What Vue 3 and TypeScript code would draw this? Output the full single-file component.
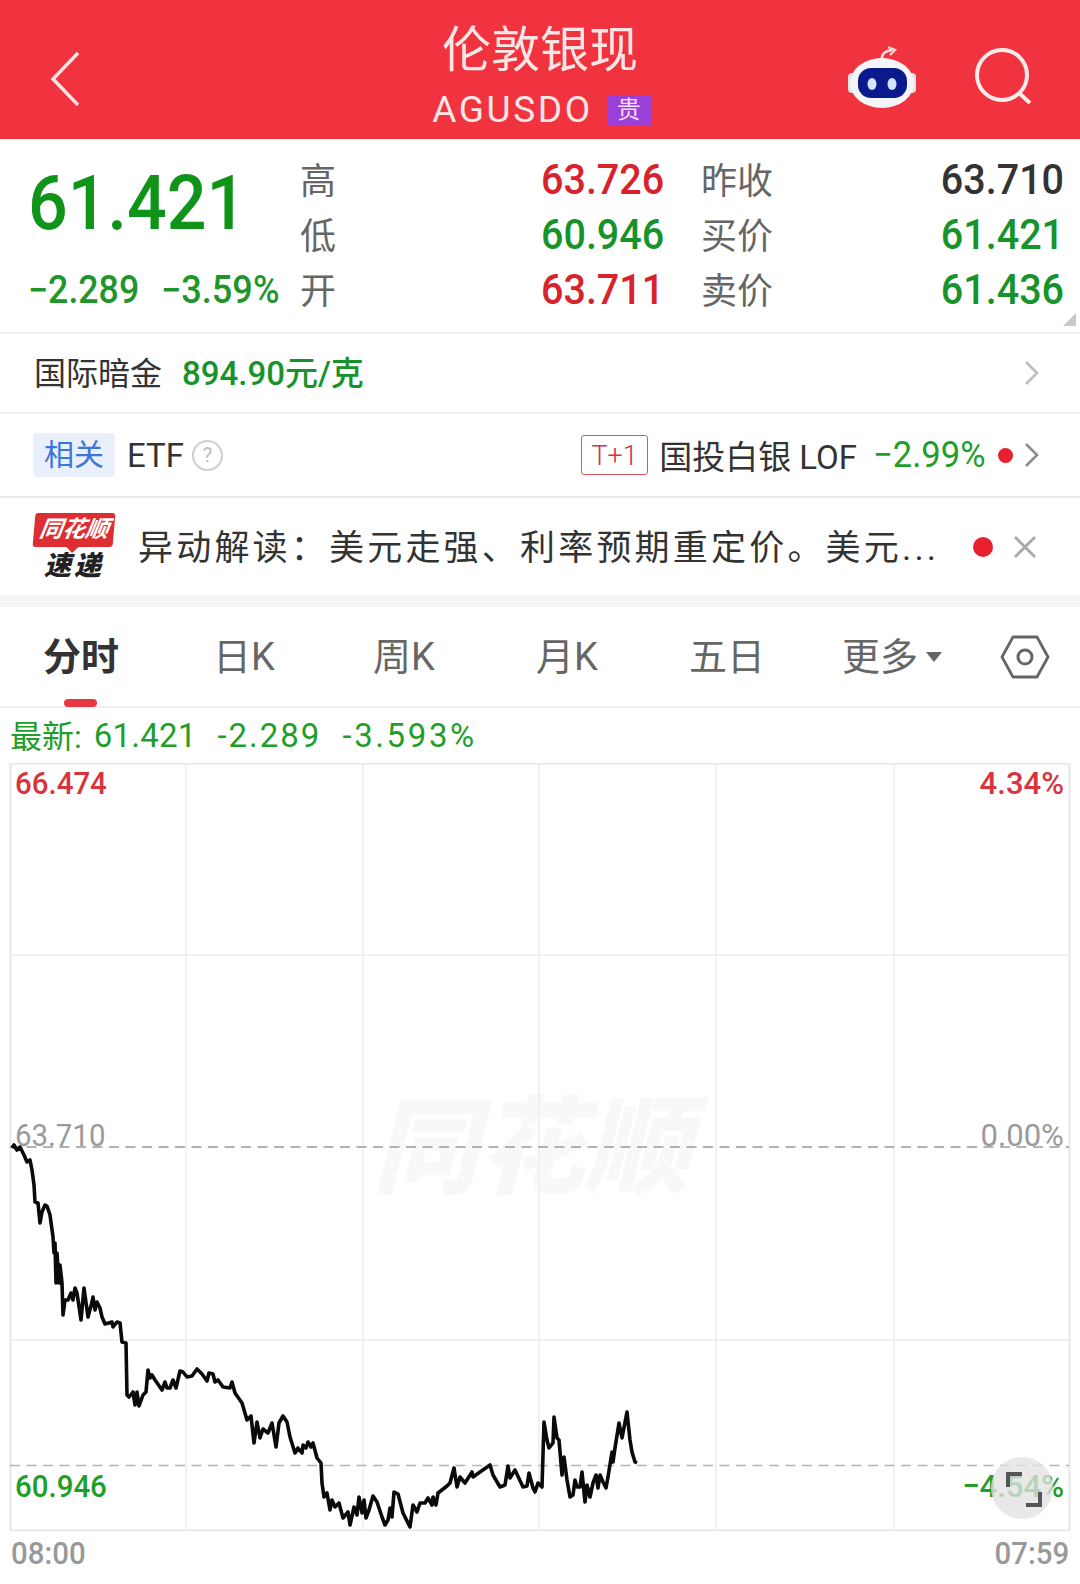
<template>
  <div class="page">
    <header class="topbar">
      <svg class="back" width="30" height="56" viewBox="0 0 30 56">
        <path d="M28 2 L3 28 L28 54" fill="none" stroke="#fbe3e3" stroke-width="3.5" />
      </svg>
      <div class="title-box">
        <div class="title">伦敦银现</div>
        <div class="subtitle">
          <span class="code">AGUSDO</span>
          <span class="metal-tag">贵</span>
        </div>
      </div>
      <div class="top-actions">
        <svg width="72" height="64" viewBox="846 45 72 64">
          <path d="M882 60 C881 54 885 51 892 50" fill="none" stroke="#f6dcdc" stroke-width="2.6" />
          <path d="M888 47 L895 50 L890 55" fill="none" stroke="#f6dcdc" stroke-width="2.4" />
          <rect x="848" y="73" width="8" height="20" rx="4" fill="#dfe3ea" />
          <rect x="908" y="73" width="8" height="20" rx="4" fill="#dfe3ea" />
          <ellipse cx="882" cy="83" rx="32" ry="25" fill="#f3f5f9" />
          <rect x="858" y="68" width="49" height="30" rx="13" fill="#0a1a8c" />
          <ellipse cx="872" cy="84" rx="4.5" ry="6" fill="#d6e4ff" />
          <ellipse cx="892" cy="84" rx="4.5" ry="6" fill="#d6e4ff" />
        </svg>
        <svg class="search" width="58" height="58" viewBox="974 49 58 58">
          <circle cx="1001" cy="76" r="25" fill="none" stroke="#fdeaea" stroke-width="4" />
          <path d="M1018 94 L1029 104" fill="none" stroke="#fdeaea" stroke-width="4" />
        </svg>
      </div>
    </header>

    <section class="quote">
      <div class="quote-main">
        <div class="big-price"><span class="squeeze">61.421</span></div>
        <div class="changes">
          <span class="squeeze">−2.289</span>
          <span class="squeeze pct">−3.59%</span>
        </div>
      </div>
      <div class="quote-grid">
        <template v-for="row in quoteRows" :key="row.a">
          <span class="q-label">{{ row.a }}</span>
          <span class="q-value squeeze" :class="row.aColor">{{ row.aValue }}</span>
          <span class="q-label">{{ row.b }}</span>
          <span class="q-value q-right" :class="row.bColor"><span class="squeeze-r">{{ row.bValue }}</span></span>
        </template>
      </div>
      <span class="corner"></span>
    </section>

    <div class="row gold-row">
      <span class="row-name">国际暗金</span>
      <span class="gold-price">894.90元/克</span>
      <svg class="chev" width="16" height="26" viewBox="0 0 16 26">
        <path d="M2 2 L13 13 L2 24" fill="none" stroke="#bdbdbd" stroke-width="2.6" />
      </svg>
    </div>

    <div class="row etf-row">
      <span class="related">相关</span>
      <span class="etf">ETF</span>
      <span class="help">?</span>
      <span class="spacer"></span>
      <span class="t1">T+1</span>
      <span class="fund">国投白银 LOF</span>
      <span class="fund-pct"><span class="squeeze">−2.99%</span></span>
      <span class="dot small"></span>
      <svg class="chev near" width="16" height="26" viewBox="0 0 16 26">
        <path d="M2 2 L13 13 L2 24" fill="none" stroke="#8c8c8c" stroke-width="2.6" />
      </svg>
    </div>

    <div class="row news-row">
      <div class="logo">
        <div class="logo-tag"><span>同花顺</span></div>
        <div class="logo-sub">速递</div>
      </div>
      <span class="news-text">异动解读：美元走强、利率预期重定价。美元...</span>
      <span class="dot"></span>
      <svg class="close" width="22" height="22" viewBox="0 0 22 22">
        <path d="M1 1 L21 21 M21 1 L1 21" fill="none" stroke="#a8a8a8" stroke-width="2.8" />
      </svg>
    </div>

    <nav class="tabs">
      <div v-for="tab in tabs" :key="tab" class="tab" :class="{ active: tab === '分时' }">{{ tab }}</div>
      <div class="tab more">更多<i class="caret"></i></div>
      <div class="tab-setting">
        <svg width="50" height="44" viewBox="0 0 50 44">
          <path d="M13 2 L37 2 L48 22 L37 42 L13 42 L2 22 Z" fill="none" stroke="#666" stroke-width="2.8" stroke-linejoin="round" />
          <circle cx="25" cy="22" r="7" fill="none" stroke="#666" stroke-width="3" />
        </svg>
      </div>
    </nav>

    <div class="latest">
      <span class="latest-cn">最新:</span>
      <span class="l-price">61.421</span>
      <span class="l-change">-2.289</span>
      <span class="l-pct">-3.593%</span>
    </div>

    <div class="chart">
      <div class="watermark">同花顺</div>

      <svg class="plot" width="1080" height="768" viewBox="0 763 1080 768">
        <rect x="10.5" y="763.5" width="1059" height="767" fill="none" stroke="#e6e6e6" stroke-width="2" />
        <path v-for="x in gridX" :key="x" :d="`M${x} 763 V1530`" stroke="#ececec" stroke-width="1.5" />
        <path d="M10 955 H1069 M10 1340 H1069" stroke="#ececec" stroke-width="1.5" />
        <path d="M10 1147 H1069" stroke="#999" stroke-width="1.6" stroke-dasharray="10 6.5" />
        <path d="M10 1465.5 H1069" stroke="#b5b5ae" stroke-width="1.4" stroke-dasharray="10 6.5" />
        <polyline :points="linePoints" fill="none" stroke="#0a0a0a" stroke-width="3.6" stroke-linejoin="round" />
      </svg>

      <span class="axis left top-row red">66.474</span>
      <span class="axis right top-row red">4.34%</span>
      <span class="axis left mid-row grey">63.710</span>
      <span class="axis right mid-row grey">0.00%</span>
      <span class="axis left low-row green">60.946</span>
      <span class="axis right low-row green">−4.54%</span>

      <div class="expand">
        <svg width="62" height="62" viewBox="0 0 62 62">
          <path d="M17 30 V17 H31 M35 48 H49 V35" fill="none" stroke="#555" stroke-width="4" />
        </svg>
      </div>
    </div>

    <div class="times">
      <span class="time-l">08:00</span>
      <span class="time-r">07:59</span>
    </div>
  </div>
</template>

<script setup lang="ts">
import { computed } from "vue";

type QuoteRow = {
  a: string;
  aValue: string;
  aColor: string;
  b: string;
  bValue: string;
  bColor: string;
};

const quoteRows: QuoteRow[] = [
  { a: "高", aValue: "63.726", aColor: "red", b: "昨收", bValue: "63.710", bColor: "dark" },
  { a: "低", aValue: "60.946", aColor: "green", b: "买价", bValue: "61.421", bColor: "green" },
  { a: "开", aValue: "63.711", aColor: "red", b: "卖价", bValue: "61.436", bColor: "green" },
];

const tabs = ["分时", "日K", "周K", "月K", "五日"];
const gridX = [186, 363, 539, 716, 894];

// 分时线，座標直接從截圖量的
const line: [number, number][] = [
  [12, 1148], [14, 1145], [17, 1150], [20, 1147], [24, 1155], [27, 1162], [30, 1160], [32, 1170],
  [34, 1185], [35, 1202], [38, 1203], [40, 1223], [42, 1212], [45, 1205], [47, 1206], [50, 1215],
  [53, 1237], [54, 1253], [55, 1243], [56, 1283], [57, 1253], [59, 1283], [60, 1265], [62, 1283],
  [63, 1315], [65, 1300], [68, 1300], [71, 1293], [73, 1300], [75, 1288], [77, 1293], [81, 1320],
  [84, 1288], [88, 1317], [92, 1302], [93, 1297], [95, 1310], [97, 1302], [100, 1308], [102, 1317],
  [105, 1324], [112, 1322], [113, 1327], [117, 1322], [120, 1323], [122, 1342], [126, 1343], [127, 1395],
  [129, 1397], [133, 1392], [135, 1405], [137, 1392], [139, 1406], [143, 1395], [146, 1392], [148, 1370],
  [150, 1378], [152, 1375], [155, 1380], [162, 1390], [165, 1382], [167, 1388], [170, 1388], [173, 1380],
  [176, 1388], [180, 1371], [183, 1372], [187, 1377], [192, 1376], [197, 1369], [202, 1374], [207, 1381],
  [209, 1373], [213, 1374], [215, 1382], [218, 1380], [223, 1387], [230, 1388], [232, 1382], [235, 1393],
  [242, 1403], [247, 1420], [251, 1416], [254, 1443], [257, 1422], [260, 1438], [263, 1429], [268, 1433],
  [272, 1423], [276, 1447], [279, 1423], [283, 1416], [287, 1422], [290, 1437], [295, 1453], [298, 1448],
  [302, 1453], [303, 1445], [306, 1448], [308, 1442], [311, 1447], [313, 1443], [317, 1458], [321, 1463],
  [322, 1483], [324, 1497], [327, 1493], [330, 1510], [332, 1500], [335, 1507], [339, 1503], [343, 1518],
  [348, 1512], [350, 1525], [354, 1507], [357, 1515], [359, 1497], [362, 1513], [364, 1500], [366, 1518],
  [369, 1510], [373, 1496], [377, 1502], [382, 1517], [385, 1525], [388, 1520], [390, 1508], [392, 1517],
  [394, 1492], [398, 1494], [403, 1513], [410, 1527], [413, 1505], [417, 1512], [420, 1503], [425, 1503],
  [428, 1498], [432, 1505], [433, 1497], [436, 1505], [438, 1493], [447, 1486], [450, 1483], [454, 1468],
  [457, 1487], [460, 1477], [465, 1483], [472, 1472], [473, 1477], [480, 1472], [490, 1465], [493, 1475],
  [500, 1487], [505, 1485], [508, 1466], [510, 1478], [515, 1470], [523, 1487], [527, 1486], [529, 1473],
  [533, 1488], [535, 1492], [538, 1483], [542, 1487], [544, 1422], [547, 1440], [549, 1448], [553, 1443],
  [554, 1417], [557, 1438], [559, 1440], [562, 1475], [564, 1457], [567, 1480], [570, 1497], [573, 1495],
  [575, 1480], [577, 1487], [580, 1487], [582, 1472], [585, 1502], [587, 1485], [590, 1497], [593, 1483],
  [596, 1475], [598, 1488], [600, 1475], [603, 1482], [606, 1488], [608, 1477], [612, 1452], [613, 1462],
  [615, 1448], [619, 1423], [622, 1438], [627, 1412], [630, 1440], [632, 1452], [635, 1462], [637, 1463],
];

const linePoints = computed(() => line.map(([x, y]) => `${x},${y}`).join(" "));
</script>

<style>
html,
body {
  margin: 0;
  background: #fff;
}
</style>

<style scoped>
.page {
  width: 1080px;
  height: 1584px;
  overflow: hidden;
  background: #fff;
  font-family: Roboto, "Noto Sans CJK SC", sans-serif;
  color: #333;
}
.topbar {
  height: 139px;
  background: #f1323f;
  display: grid;
  grid-template-columns: 1fr auto 1fr;
  align-items: center;
}
.back {
  margin-left: 50px;
  margin-top: 18px;
}
.title-box {
  text-align: center;
  color: #fbe6e6;
}
.title {
  font-size: 49px;
  line-height: 56px;
  margin-top: 14px;
}
.subtitle {
  display: flex;
  align-items: center;
  justify-content: center;
  gap: 14px;
  margin-top: 10px;
  margin-left: 3px;
}
.code {
  font-size: 37px;
  line-height: 42px;
  letter-spacing: 2.6px;
}
.metal-tag {
  width: 44px;
  height: 30px;
  background: #9a3fd8;
  color: #f4dcff;
  font-size: 24px;
  line-height: 30px;
  text-align: center;
}
.top-actions {
  display: flex;
  justify-content: flex-end;
  align-items: center;
  padding-right: 47px;
  padding-top: 14px;
  gap: 57px;
}
.quote {
  position: relative;
  height: 195px;
  display: flex;
  border-bottom: 2px solid #f0f0f0;
  box-sizing: border-box;
}
.quote-main {
  width: 300px;
  padding-left: 28px;
  box-sizing: border-box;
}
.big-price {
  font-size: 76px;
  line-height: 76px;
  font-weight: 500;
  color: #0f9419;
  margin-top: 26px;
}
.squeeze,
.squeeze-r {
  display: inline-block;
  transform-origin: left center;
  transform: scaleX(0.94);
}
.squeeze-r {
  transform-origin: right center;
}
.big-price .squeeze {
  transform: scaleX(0.92);
}
.changes {
  display: flex;
  font-size: 38px;
  line-height: 44px;
  font-weight: 500;
  color: #1f952a;
  margin-top: 27px;
  white-space: nowrap;
}
.changes .squeeze {
  width: 133px;
}
.changes .pct {
  transform: scaleX(0.95);
}
.quote-grid {
  flex: 1;
  display: grid;
  grid-template-columns: 241px 160px 1fr auto;
  grid-auto-rows: 55px;
  align-items: center;
  padding-top: 13px;
  padding-right: 16px;
}
.q-label {
  font-size: 36px;
  color: #666;
  line-height: 55px;
  margin-top: 6px;
}
.q-value {
  font-size: 42px;
  line-height: 55px;
  font-weight: 500;
}
.q-right {
  text-align: right;
}
.red {
  color: #d8222c;
}
.green {
  color: #16932a;
}
.dark {
  color: #333;
}
.corner {
  position: absolute;
  right: 4px;
  bottom: 6px;
  width: 0;
  height: 0;
  border-left: 13px solid transparent;
  border-bottom: 13px solid #c9c9c9;
}
.row {
  display: flex;
  align-items: center;
  box-sizing: border-box;
}
.gold-row {
  height: 80px;
  padding-left: 34px;
  border-bottom: 2px solid #f0f0f0;
}
.row-name {
  font-size: 32px;
  color: #333;
  margin-top: -4px;
}
.gold-price {
  font-size: 33px;
  font-weight: 500;
  color: #16932a;
  margin-left: 20px;
  margin-top: -4px;
  flex: 1;
}
.chev {
  margin-right: 40px;
}
.etf-row {
  height: 84px;
  padding-left: 33px;
  border-bottom: 2px solid #e8e8e8;
}
.related {
  width: 82px;
  height: 44px;
  background: #e9f0fc;
  border-radius: 4px;
  color: #3c76d8;
  font-size: 30px;
  line-height: 44px;
  text-align: center;
}
.etf {
  font-size: 33px;
  margin-left: 12px;
}
.help {
  width: 27px;
  height: 27px;
  margin-left: 8px;
  border: 2px solid #cfcfcf;
  border-radius: 50%;
  color: #bdbdbd;
  font-size: 20px;
  line-height: 27px;
  text-align: center;
}
.spacer {
  flex: 1;
}
.t1 {
  width: 65px;
  height: 38px;
  border: 1px solid #d9545c;
  border-radius: 3px;
  color: #d0304a;
  font-size: 27px;
  font-weight: 300;
  line-height: 40px;
  text-align: center;
}
.fund {
  font-size: 33px;
  margin-left: 11px;
}
.fund-pct {
  width: 114px;
  margin-left: 16px;
  font-size: 36px;
  color: #1f9e2a;
  white-space: nowrap;
}
.fund-pct .squeeze {
  transform: scaleX(0.96);
}
.dot {
  width: 20px;
  height: 20px;
  border-radius: 50%;
  background: #e8202e;
}
.dot.small {
  width: 15px;
  height: 15px;
  margin-left: 11px;
}
.chev.near {
  margin-left: 11px;
}
.news-row {
  height: 97px;
  padding-left: 34px;
}
.logo {
  width: 80px;
  text-align: center;
}
.logo-tag {
  position: relative;
  height: 34px;
  background: #dd2f33;
  border-radius: 3px;
  transform: skewX(-5deg);
  color: #fff;
  font-size: 23px;
  font-weight: 700;
  line-height: 34px;
}
.logo-tag span {
  display: block;
  font-style: italic;
  transform: skewX(-4deg);
}
.logo-tag::after {
  content: "";
  position: absolute;
  left: 34px;
  bottom: -6px;
  border-left: 6px solid transparent;
  border-right: 6px solid transparent;
  border-top: 6px solid #dd2f33;
}
.logo-sub {
  margin-top: 5px;
  font-size: 27px;
  line-height: 28px;
  font-weight: 900;
  font-style: italic;
  color: #222;
  letter-spacing: 3px;
}
.news-text {
  flex: 1;
  margin-left: 24px;
  margin-top: -4px;
  font-size: 35px;
  letter-spacing: 3.2px;
  color: #333;
  white-space: nowrap;
}
.close {
  margin-left: 21px;
  margin-right: 44px;
}
.tabs {
  display: grid;
  grid-template-columns: 162px 164px 156px 170px 150px 180px 98px;
  height: 99px;
  border-top: 12px solid #f5f5f5;
  border-bottom: 2px solid #f0f0f0;
}
.tab {
  position: relative;
  text-align: center;
  font-size: 38px;
  line-height: 100px;
  color: #666;
}
.tab.active {
  font-weight: 700;
  color: #333;
}
.tab.active::after {
  content: "";
  position: absolute;
  left: 64px;
  bottom: 0;
  width: 33px;
  height: 8px;
  background: #e8383f;
  border-radius: 4px;
}
.more {
  display: flex;
  justify-content: center;
  align-items: center;
  gap: 8px;
  line-height: 1;
}
.caret {
  border-left: 8px solid transparent;
  border-right: 8px solid transparent;
  border-top: 10px solid #666;
}
.tab-setting {
  display: flex;
  align-items: center;
  padding-left: 18px;
}
.latest {
  display: flex;
  align-items: center;
  gap: 21px;
  height: 55px;
  padding-left: 10px;
  font-size: 33px;
  color: #1f9e2a;
}
.latest-cn {
  margin-right: -9px;
  margin-top: -3px;
  font-size: 32px;
}
.l-price {
  letter-spacing: 0.2px;
}
.l-change {
  letter-spacing: 2px;
}
.l-pct {
  letter-spacing: 2.6px;
}
.chart {
  position: relative;
  height: 768px;
}
.plot {
  position: relative;
  display: block;
}
.watermark {
  position: absolute;
  left: 372px;
  top: 326px;
  font-size: 106px;
  line-height: 120px;
  font-weight: 900;
  font-style: italic;
  color: #f8f8f8;
}
.axis {
  position: absolute;
  font-size: 32px;
  line-height: 36px;
  font-weight: 500;
  white-space: nowrap;
}
.axis.left {
  left: 15px;
  transform: scaleX(0.92);
  transform-origin: left center;
}
.axis.right {
  right: 16px;
  transform: scaleX(0.97);
  transform-origin: right center;
}
.top-row {
  top: 2px;
}
.mid-row {
  top: 354px;
}
.low-row {
  top: 705px;
}
.axis.grey {
  color: #9a9a9a;
  font-weight: 400;
}
.axis.red {
  color: #d8343b;
}
.axis.green {
  color: #1f9e2a;
}
.expand {
  position: absolute;
  left: 991px;
  top: 694px;
  width: 62px;
  height: 62px;
  border-radius: 50%;
  background: rgba(226, 226, 226, 0.78);
}
.times {
  display: flex;
  justify-content: space-between;
  padding: 4px 11px 0;
  font-size: 32px;
  line-height: 36px;
  font-weight: 500;
  color: #999;
}
.time-l,
.time-r {
  display: inline-block;
  transform: scaleX(0.92);
  transform-origin: left center;
}
.time-r {
  transform-origin: right center;
}
</style>
